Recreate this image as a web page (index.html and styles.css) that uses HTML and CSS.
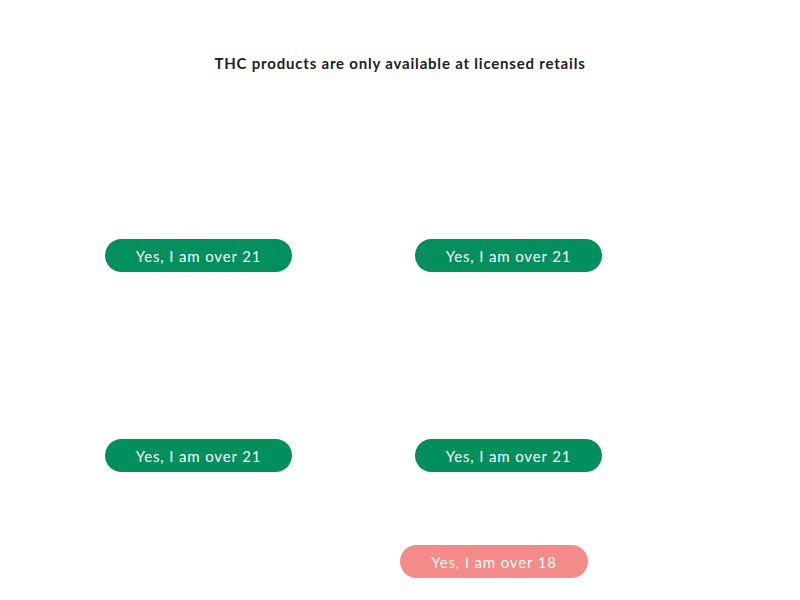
FILE: index.html
```html
<!DOCTYPE html>
<html>
<head>
<meta charset="utf-8">
<link rel="stylesheet" href="styles.css">
</head>
<body>
<div class="page">
  <h1 class="title">THC products are only available at licensed retails</h1>
  <div class="grid">
    <button class="btn btn-green">Yes, I am over 21</button>
    <button class="btn btn-green">Yes, I am over 21</button>
    <button class="btn btn-green">Yes, I am over 21</button>
    <button class="btn btn-green">Yes, I am over 21</button>
  </div>
  <div class="extra">
    <button class="btn btn-pink">Yes, I am over 18</button>
  </div>
</div>
</body>
</html>
```
FILE: styles.css
```css
html, body {
  margin: 0;
  padding: 0;
  background: #ffffff;
}
.page {
  width: 800px;
  height: 600px;
  font-family: Lato, "Noto Sans", sans-serif;
}
.title {
  margin: 0;
  padding-top: 54px;
  text-align: center;
  font-size: 15px;
  line-height: 18px;
  font-weight: 700;
  letter-spacing: 0.8px;
  color: #222222;
}
.grid {
  display: grid;
  grid-template-columns: 310px 310px;
  row-gap: 167px;
  padding-left: 105px;
  margin-top: 167px;
  justify-items: start;
}
.btn {
  width: 187px;
  height: 33px;
  border: none;
  border-radius: 17px;
  color: #ffffff;
  font-family: Lato, "Noto Sans", sans-serif;
  font-size: 15px;
  letter-spacing: 0.85px;
  padding: 0;
  cursor: pointer;
}
.btn-green {
  background: #008f5d;
}
.btn-pink {
  width: 188px;
  background: #f48b88;
}
.extra {
  padding-left: 400px;
  margin-top: 73px;
}
```
